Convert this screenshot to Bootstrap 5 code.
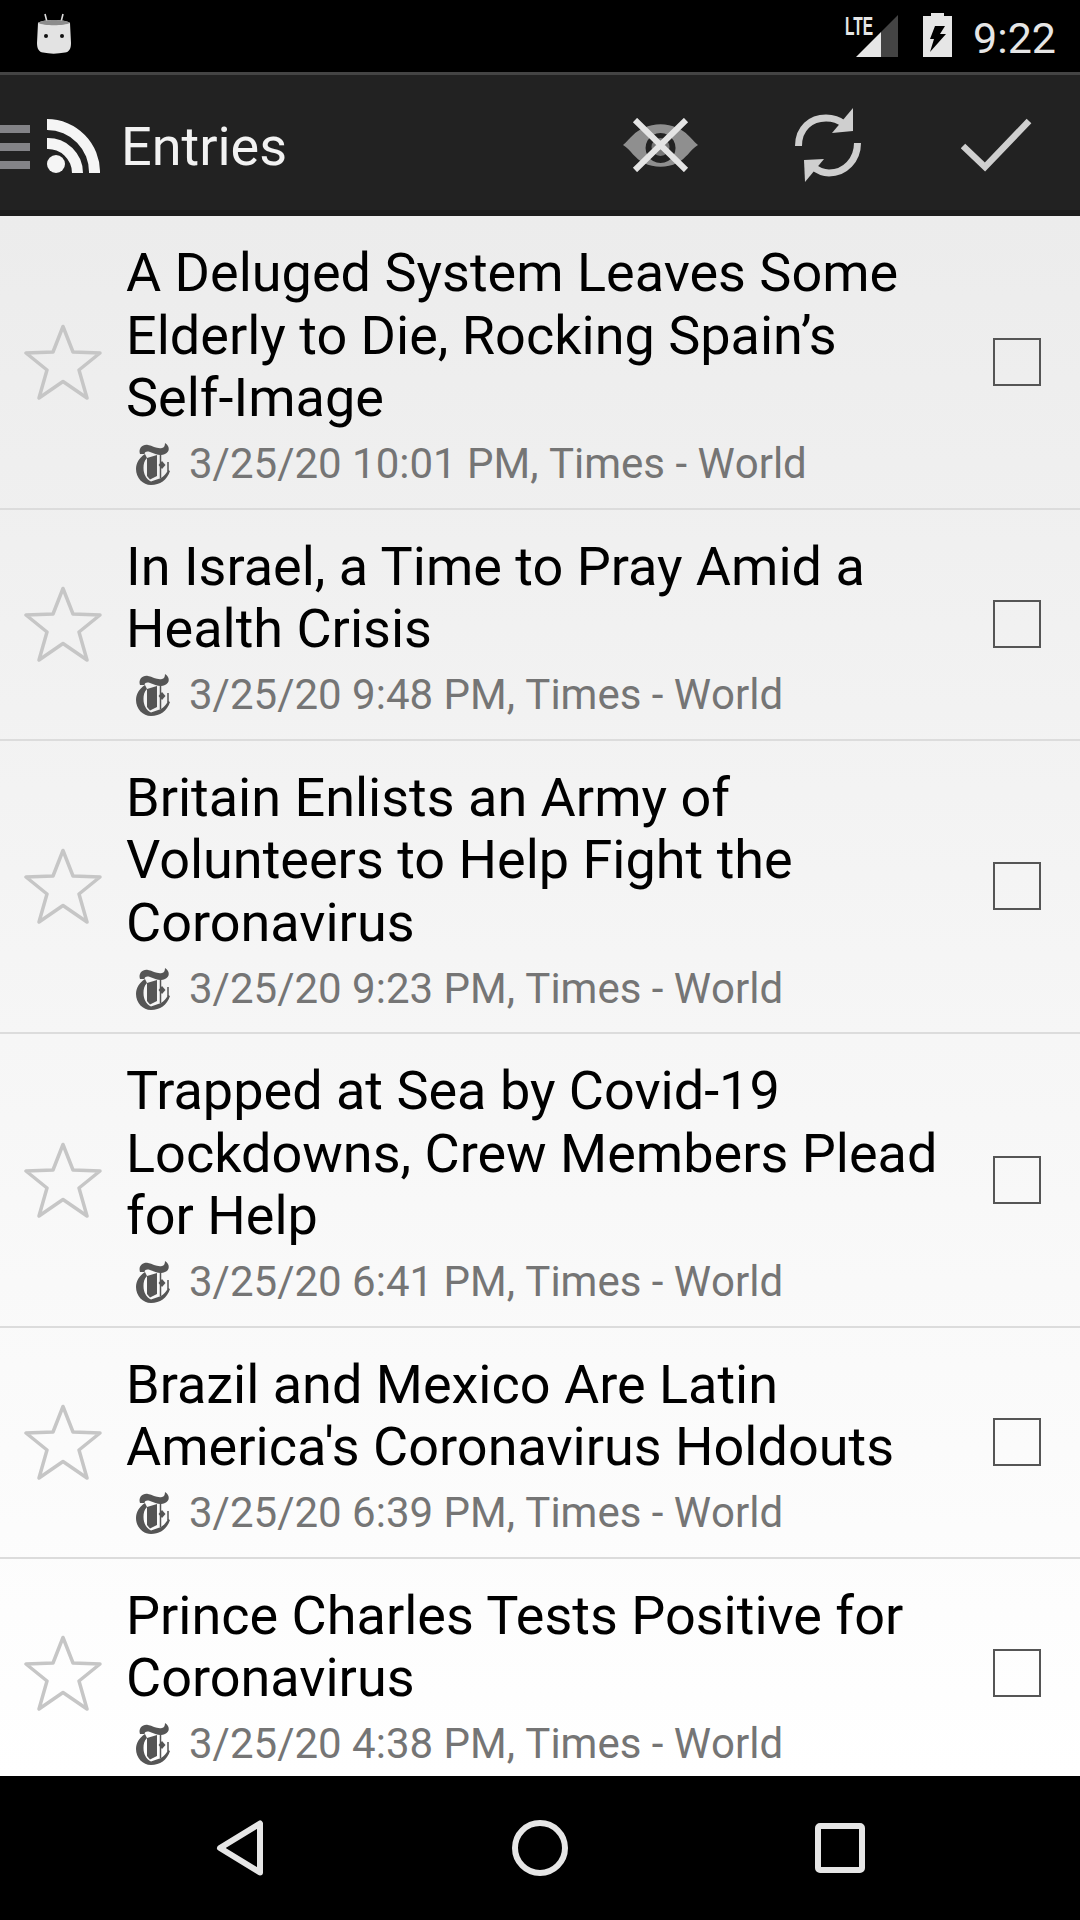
<!DOCTYPE html>
<html lang="en">
<head>
    <meta charset="UTF-8">
    <meta name="viewport" content="width=device-width, initial-scale=1.0">
    <title>Entries</title>
    <link href="https://cdn.jsdelivr.net/npm/bootstrap@5.3.2/dist/css/bootstrap.min.css" rel="stylesheet">
    <style>
        body {
            font-family: Roboto, "Liberation Sans", sans-serif;
            background-color: #000;
        }
        .phone {
            width: 1080px;
            height: 1920px;
            overflow: hidden;
        }
        .status-bar {
            height: 72px;
            flex: none;
            background-color: #000;
            color: #e6e6e6;
            padding: 13px 24px 0 37px;
        }
        .status-time {
            font-size: 43px;
            line-height: 50px;
            margin-left: 21px;
        }
        .lte-label {
            font-family: "Liberation Sans", sans-serif;
            font-size: 25px;
            line-height: 20px;
            font-weight: 700;
            transform: scaleX(.62);
            transform-origin: left top;
            width: 26px;
            margin-right: -15px;
            margin-top: 3px;
        }
        .signal-icon { margin-top: 2px; margin-right: 25px; }
        .tool-bar {
            height: 144px;
            flex: none;
            background-color: #222;
            border-top: 3px solid #444;
            border-bottom: 6px solid #1b1b1b;
        }
        .drawer-icon { margin-right: 17px; margin-top: 8px; }
        .rss-icon { margin-top: 6px; }
        .bar-title {
            color: #f2f2f2;
            font-size: 54px;
            line-height: 60px;
            margin-left: 21px;
            margin-top: 8px;
            font-weight: 400;
        }
        .tool-hide { margin-right: 97px; margin-top: 4px; }
        .tool-sync { margin-right: 100px; margin-top: 4px; }
        .tool-done { margin-right: 48px; margin-top: 4px; }
        .entry-list {
            background: linear-gradient(#ececec, #fff);
            min-height: 0;
        }
        .entry-list > .entry-row {
            background: transparent;
            border: 0;
            border-bottom: 2px solid #dcdcdc;
            border-radius: 0;
            padding: 0 39px 0 0;
            color: #000;
        }
        .star-cell {
            width: 126px;
            flex: none;
            padding-left: 24px;
        }
        .entry-text {
            padding: 26px 43px 13.5px 0;
        }
        .entry-title {
            font-size: 54px;
            line-height: 62.5px;
        }
        .entry-meta {
            color: #757575;
            font-size: 42px;
            font-kerning: none;
            line-height: 60px;
            margin-top: 4.5px;
            margin-left: 10px;
        }
        .paper-logo { margin-right: 19px; flex: none; }
        .tick-box {
            width: 48px;
            height: 48px;
            border: 2px solid #555;
            flex: none;
        }
        .nav-bar {
            height: 144px;
            background-color: #000;
            padding: 0 90px;
        }
        .nav-slot { width: 300px; }
    </style>
</head>
<body>
    <div class="phone d-flex flex-column">
        <!-- Status bar -->
        <div class="status-bar d-flex align-items-start">
            <svg width="34" height="41" viewBox="0 0 34 41">
                <path d="M8 1 L10 9 M26 1 L24 9" stroke="#ddd" stroke-width="1.6" fill="none"/>
                <path d="M1 10 C5 6 29 6 33 10 L34 30 C34 36 32 39 28 39.500 C20 41 13 41 6 39.500 C2 39 0 36 0 30 Z" fill="#e3e3e3"/>
                <path d="M1 10 C5 6 29 6 33 10 C27 13 7 13 1 10 Z" fill="#8c8c8c"/>
                <circle cx="9" cy="23" r="2" fill="#111"/>
                <circle cx="25" cy="23" r="2" fill="#111"/>
            </svg>
            <div class="ms-auto lte-label">LTE</div>
            <svg class="signal-icon" width="42" height="42" viewBox="0 0 42 42">
                <path d="M0 42 L25 17 L25 42 Z" fill="#e6e6e6"/>
                <path d="M25 17 L42 0 L42 42 L25 42 Z" fill="#444"/>
            </svg>
            <svg width="29" height="44" viewBox="0 0 29 44">
                <path d="M8 0 H21 V3 H29 V44 H0 V3 H8 Z" fill="#e6e6e6"/>
                <path d="M12 13 H22 L17 21 H23 L7 39 L11 26 H7 Z" fill="#000"/>
            </svg>
            <div class="status-time">9:22</div>
        </div>

        <!-- Action bar -->
        <div class="tool-bar d-flex align-items-center">
            <svg class="drawer-icon" width="30" height="44" viewBox="0 0 30 44">
                <path d="M0 0 H30 V8 H0 Z M0 18 H30 V26 H0 Z M0 36 H30 V44 H0 Z" fill="#838387"/>
            </svg>
            <svg class="rss-icon" width="53" height="54" viewBox="0 0 53 54">
                <circle cx="9" cy="45" r="9" fill="#f5f5f5"/>
                <path d="M0 19 A 35 35 0 0 1 36 54 H25 A 24 24 0 0 0 0 30 Z" fill="#f5f5f5"/>
                <path d="M0 0 A 53 53 0 0 1 53 54 H42 A 42 42 0 0 0 0 11 Z" fill="#f5f5f5"/>
            </svg>
            <div class="bar-title">Entries</div>
            <svg class="tool-hide ms-auto" width="75" height="54" viewBox="0 0 75 54">
                <path d="M0 27 C8 20 12 13 21 10 C31 5 44 5 54 10 C63 13 67 20 75 27 C67 32 63 41 54 45 C44 50 31 50 21 45 C12 41 8 32 0 27 Z M37.500 15 A 15 15 0 1 0 37.600 15 Z" fill="#8f8f8f" fill-rule="evenodd"/>
                <circle cx="37.500" cy="29" r="9" fill="#777"/>
                <path d="M12 2 L63 52 M63 2 L12 52" stroke="#e4e4e4" stroke-width="6" fill="none"/>
            </svg>
            <svg class="tool-sync" width="66" height="74" viewBox="0 0 66 74">
                <path d="M3.500 38 C3.500 20 16 10 31 10 C38 10 44 12 49 16" stroke="#cfcfcf" stroke-width="7" fill="none"/>
                <path d="M37 25 L58 0 L58 23 Z" fill="#cfcfcf"/>
                <path d="M62.500 35 C62.500 52 50 65 34 65 C27 65 22 62 17 58" stroke="#cfcfcf" stroke-width="7" fill="none"/>
                <path d="M29 51 L10 74 L9 52 Z" fill="#cfcfcf"/>
            </svg>
            <svg class="tool-done" width="71" height="54" viewBox="0 0 71 54">
                <path d="M2 28 L24 49 L68 3" stroke="#cfcfcf" stroke-width="6.500" fill="none"/>
            </svg>
        </div>

        <!-- Entries -->
        <div id="entries" class="entry-list list-group list-group-flush flex-grow-1 overflow-hidden"></div>

        <!-- Nav buttons -->
        <div class="nav-bar d-flex align-items-center flex-shrink-0">
            <div class="nav-slot d-flex justify-content-center">
                <svg width="48" height="56" viewBox="0 0 48 56">
                    <path d="M44 3.500 V52.500 L4 28 Z" stroke="#e6e6e6" stroke-width="6" stroke-linejoin="round" fill="none"/>
                </svg>
            </div>
            <div class="nav-slot d-flex justify-content-center">
                <svg width="56" height="56" viewBox="0 0 56 56">
                    <circle cx="28" cy="28" r="25" stroke="#e6e6e6" stroke-width="6" fill="none"/>
                </svg>
            </div>
            <div class="nav-slot d-flex justify-content-center">
                <svg width="50" height="50" viewBox="0 0 50 50">
                    <rect x="3" y="3" width="44" height="44" rx="2" stroke="#e6e6e6" stroke-width="6" fill="none"/>
                </svg>
            </div>
        </div>
    </div>

    <script>
        const entries = [
            ['A Deluged System Leaves Some Elderly to Die, Rocking Spain’s Self-Image', '3/25/20 10:01 PM'],
            ['In Israel, a Time to Pray Amid a Health Crisis', '3/25/20 9:48 PM'],
            ['Britain Enlists an Army of Volunteers to Help Fight the Coronavirus', '3/25/20 9:23 PM'],
            ['Trapped at Sea by Covid-19 Lockdowns, Crew Members Plead for Help', '3/25/20 6:41 PM'],
            ['Brazil and Mexico Are Latin America\'s Coronavirus Holdouts', '3/25/20 6:39 PM'],
            ['Prince Charles Tests Positive for Coronavirus', '3/25/20 4:38 PM']
        ];

        const starIcon = `<svg width="78" height="76" viewBox="0 0 78 76">
            <path d="M39 2.500 L49 28 L76 29 L55 46 L63 74 L39 57.500 L15 74 L23 46 L2 29 L29 28 Z" stroke="#c6c6c6" stroke-width="3.500" stroke-linejoin="round" fill="none"/>
        </svg>`;

        const paperLogo = `<svg class="paper-logo" width="34" height="42" viewBox="0 0 34 42">
            <path d="M4 11 C2 5 7 1 12 2 C17 3 21 6 26 5 C28 4.500 29 3 29 0 C34 3 34 9 29 11 C24 13.500 19 10.500 14 9 C11 8 9 8.500 8.500 11 Z" fill="#555"/>
            <path d="M9 11 C3 15 0 20 0 26 C0 35 7 42 15 42 C24 42 31 37 34 28 L32 27 C30 31 28 33 25 35 L15 38.500 C10 36 7.500 31 7.500 25 C7.500 21 8 18 11 15 Z" fill="#555"/>
            <path d="M11 15 L21 12 V33 L14 36.500 L11 33 Z" fill="#555"/>
            <path d="M24.500 11 V35 M32 19 V28" stroke="#555" stroke-width="1.500" fill="none"/>
            <path d="M26 18 L29.500 22 L26 26 L22.500 22 Z" fill="#555"/>
        </svg>`;

        document.getElementById('entries').innerHTML = entries.map(e => `
            <div class="entry-row list-group-item d-flex align-items-center flex-shrink-0">
                <div class="star-cell">${starIcon}</div>
                <div class="entry-text flex-grow-1">
                    <div class="entry-title">${e[0]}</div>
                    <div class="entry-meta d-flex align-items-center">${paperLogo}<span>${e[1]}, Times - World</span></div>
                </div>
                <div class="tick-box"></div>
            </div>`).join('');
    </script>

    <script src="https://cdn.jsdelivr.net/npm/bootstrap@5.3.2/dist/js/bootstrap.bundle.min.js"></script>
</body>
</html>
